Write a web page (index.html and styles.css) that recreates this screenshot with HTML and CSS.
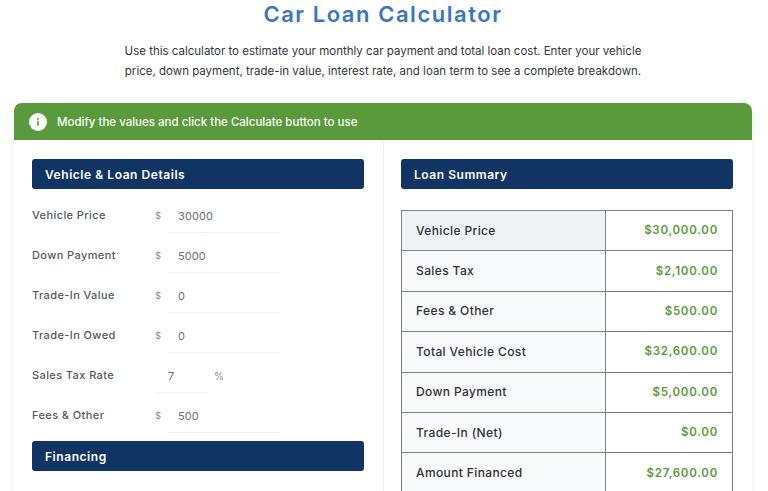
FILE: index.html
```html
<!DOCTYPE html>
<html lang="en">
<head>
<meta charset="utf-8">
<title>Car Loan Calculator</title>
<link rel="stylesheet" href="styles.css">
</head>
<body>
<main class="page">
  <h1 class="title">Car Loan Calculator</h1>
  <p class="intro">Use this calculator to estimate your monthly car payment and total loan cost. Enter your vehicle<br>price, down payment, trade-in value, interest rate, and loan term to see a complete breakdown.</p>
  <section class="card">
    <div class="banner">
      <svg class="info" viewBox="0 0 18 18" width="18" height="18" aria-hidden="true"><circle cx="9" cy="9" r="9" fill="#fff"/><rect x="8.2" y="7.7" width="1.6" height="5" rx=".4" fill="#5a9a3c"/><circle cx="9" cy="5.9" r="1" fill="#5a9a3c"/></svg>
      <span>Modify the values and click the Calculate button to use</span>
    </div>
    <div class="columns">
      <div class="col col-left">
        <h2 class="section">Vehicle &amp; Loan Details</h2>
        <div class="rows">
          <div class="row"><label>Vehicle Price</label><span class="unit">$</span><span class="field">30000</span></div>
          <div class="row"><label>Down Payment</label><span class="unit">$</span><span class="field">5000</span></div>
          <div class="row"><label>Trade-In Value</label><span class="unit">$</span><span class="field">0</span></div>
          <div class="row"><label>Trade-In Owed</label><span class="unit">$</span><span class="field">0</span></div>
          <div class="row"><label>Sales Tax Rate</label><span class="field short">7</span><span class="unit pct">%</span></div>
          <div class="row"><label>Fees &amp; Other</label><span class="unit">$</span><span class="field">500</span></div>
        </div>
        <h2 class="section">Financing</h2>
      </div>
      <div class="col col-right">
        <h2 class="section">Loan Summary</h2>
        <table class="summary">
          <tr class="first"><th>Vehicle Price</th><td>$30,000.00</td></tr>
          <tr><th>Sales Tax</th><td>$2,100.00</td></tr>
          <tr><th>Fees &amp; Other</th><td>$500.00</td></tr>
          <tr><th>Total Vehicle Cost</th><td>$32,600.00</td></tr>
          <tr><th>Down Payment</th><td>$5,000.00</td></tr>
          <tr><th>Trade-In (Net)</th><td>$0.00</td></tr>
          <tr><th>Amount Financed</th><td>$27,600.00</td></tr>
        </table>
      </div>
    </div>
  </section>
</main>
</body>
</html>
```
FILE: styles.css
```css
* { box-sizing: border-box; }
html, body { margin: 0; height: 491px; overflow: hidden; background: #fff; }
body { font-family: Inter, "Liberation Sans", sans-serif; }
.page { padding: 0 16px 0 14px; }
.title {
  margin: 0;
  height: 41px;
  text-align: center;
  font-size: 22px;
  line-height: 28px;
  font-weight: 600;
  letter-spacing: 1.55px;
  color: #3b75c3;
}
.intro {
  margin: 0;
  height: 62px;
  text-align: center;
  font-size: 11.5px;
  line-height: 20px;
  color: #33373d;
}
.card {
  height: 400px;
  border-radius: 8px 8px 0 0;
  box-shadow: 0 2px 10px rgba(40, 50, 70, .09);
}
.banner {
  height: 37px;
  display: flex;
  align-items: center;
  gap: 10px;
  padding-left: 15px;
  background: #5a9a3c;
  border-radius: 8px 8px 0 0;
  color: #fff;
  font-size: 11.5px;
  font-weight: 500;
}
.columns { display: grid; grid-template-columns: 370px 368px; }
.col { padding: 19px 19px 0 18px; }
.col-left { border-right: 1px solid #f0f1f3; }
.col-right { padding-left: 17px; }
.section {
  margin: 0;
  height: 30px;
  padding-left: 13px;
  display: flex;
  align-items: center;
  background: #103464;
  border-radius: 3px;
  color: #fff;
  font-size: 12px;
  font-weight: 600;
  letter-spacing: .55px;
}
.rows { padding-top: 7px; height: 252px; }
.row {
  height: 40px;
  display: flex;
  align-items: center;
  font-size: 11px;
  color: #55595f;
}
.row label { width: 123px; font-weight: 500; letter-spacing: .4px; padding-bottom: 2px; }
.unit { width: 13px; font-size: 9.5px; color: #8a8c90; padding-bottom: 1px; }
.field {
  width: 112px;
  height: 33px;
  padding: 9px 0 0 10px;
  border-bottom: 1px solid #f1f2f4;
  font-size: 11px;
  line-height: 14px;
  letter-spacing: .1px;
  color: #6a6e74;
}
.field.short { width: 52px; margin-left: 1px; padding-left: 12px; }
.pct { margin-left: 6px; width: 14px; font-size: 10px; }
.summary {
  margin-top: 21px;
  width: 332px;
  table-layout: fixed;
  border-collapse: collapse;
}
.summary tr { height: 40.4px; }
.summary th, .summary td { border: 1px solid #7d8187; }
.summary th {
  width: 204px;
  padding: 0 0 1px 14px;
  text-align: left;
  font-size: 12px;
  font-weight: 500;
  letter-spacing: .38px;
  color: #2e3238;
  background: #f8f9fa;
}
.summary .first th { background: #eff3f6; }
.summary td {
  padding: 0 14px 1px 0;
  text-align: right;
  font-size: 11.5px;
  font-weight: 600;
  letter-spacing: .75px;
  color: #5a9a3c;
  background: #fff;
}
```
